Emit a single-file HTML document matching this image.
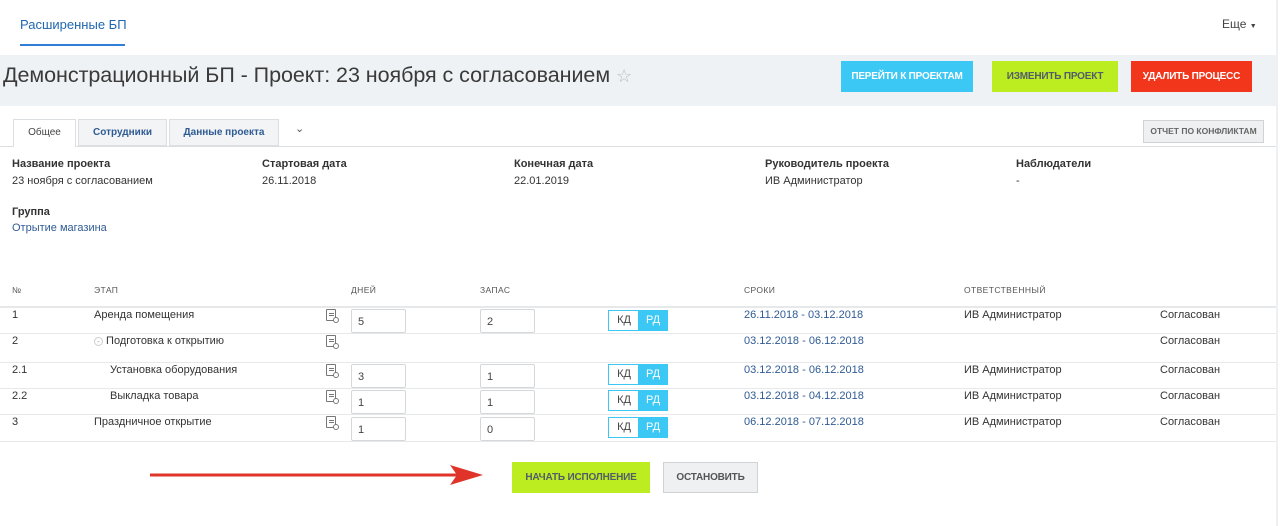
<!DOCTYPE html>
<html><head><meta charset="utf-8"><style>
*{margin:0;padding:0;box-sizing:border-box}
body{width:1280px;height:526px;background:#fff;font-family:"Liberation Sans",sans-serif;font-size:11px;color:#333;position:relative;overflow:hidden}
.a{position:absolute;white-space:nowrap}
.btn{position:absolute;color:#fff;font-weight:bold;font-size:10px;text-align:center;letter-spacing:-0.2px}
.lbl{font-weight:bold;color:#333;font-size:11px}
.hd{font-size:8.5px;color:#555;letter-spacing:.4px}
.hl{position:absolute;left:0;width:1276px;height:1px;background:#e6e8ea}
.in{position:absolute;width:55px;height:24px;border:1px solid #d5d8da;border-radius:2px;padding:6px 0 0 6px;font-size:11px;color:#444}
.sw{position:absolute;width:60px;height:21px;border:1px solid #3bc8f5;font-size:11px}
.sw span{position:absolute;top:0;height:19px;width:30px;text-align:center;line-height:19px}
.ic{position:absolute;width:10px;height:12px;border:1px solid #777;border-radius:1px}
.ic:before{content:"";position:absolute;left:2px;top:3px;width:5px;height:1px;background:#777;box-shadow:0 2px 0 #777}
.ic:after{content:"";position:absolute;left:6px;top:7px;width:4px;height:4px;border:1px solid #777;border-radius:50%;background:#fff}
.blue{color:#2f5b94}
</style></head><body>
<div class="a" style="left:20px;top:17px;font-size:13px;color:#2067b0">Расширенные БП</div>
<div class="a" style="left:20px;top:44px;width:105px;height:2px;background:#2f7fd6"></div>
<div class="a" style="left:1222px;top:17px;font-size:12px;color:#444">Еще <span style="font-size:7px">▼</span></div>
<div class="a" style="left:1276px;top:0;width:2px;height:526px;background:#eef0f1"></div>
<div class="a" style="left:0;top:55px;width:1276px;height:51px;background:#eef2f4"></div>
<div class="a" style="left:3px;top:63px;font-size:21.5px;color:#3a3a3a;letter-spacing:-0.05px">Демонстрационный БП - Проект: 23 ноября с согласованием <span style="color:#bbb;font-size:18px">☆</span></div>
<div class="btn" style="left:841px;top:61px;width:132px;height:31px;line-height:31px;background:#3bc8f5">ПЕРЕЙТИ К ПРОЕКТАМ</div>
<div class="btn" style="left:992px;top:61px;width:126px;height:31px;line-height:31px;background:#bbed21;color:#535c69">ИЗМЕНИТЬ ПРОЕКТ</div>
<div class="btn" style="left:1131px;top:61px;width:121px;height:31px;line-height:31px;background:#f1361b">УДАЛИТЬ ПРОЦЕСС</div>

<div class="a" style="left:0;top:146px;width:1276px;height:1px;background:#dcdfe1"></div>
<div class="a" style="left:13px;top:119px;width:63px;height:28px;border:1px solid #dcdfe1;border-bottom:none;background:#fff;text-align:center;line-height:25px;font-size:10px;color:#444">Общее</div>
<div class="a" style="left:78px;top:119px;width:89px;height:27px;border:1px solid #dcdfe1;background:#f2f4f5;text-align:center;line-height:25px;font-size:10px;color:#2f5b94;font-weight:bold">Сотрудники</div>
<div class="a" style="left:169px;top:119px;width:110px;height:27px;border:1px solid #dcdfe1;background:#f2f4f5;text-align:center;line-height:25px;font-size:10px;color:#2f5b94;font-weight:bold">Данные проекта</div>
<div class="a" style="left:295px;top:122px;font-size:11px;color:#555">⌄</div>
<div class="a" style="left:1143px;top:120px;width:121px;height:23px;border:1px solid #cfd3d6;background:#eef0f1;text-align:center;line-height:21px;font-size:8.5px;font-weight:bold;color:#666">ОТЧЕТ ПО КОНФЛИКТАМ</div>

<div class="a lbl" style="left:12px;top:158px">Название проекта</div><div class="a" style="left:12px;top:175px">23 ноября с согласованием</div>
<div class="a lbl" style="left:262px;top:158px">Стартовая дата</div><div class="a" style="left:262px;top:175px">26.11.2018</div>
<div class="a lbl" style="left:514px;top:158px">Конечная дата</div><div class="a" style="left:514px;top:175px">22.01.2019</div>
<div class="a lbl" style="left:765px;top:158px">Руководитель проекта</div><div class="a" style="left:765px;top:175px">ИВ Администратор</div>
<div class="a lbl" style="left:1016px;top:158px">Наблюдатели</div><div class="a" style="left:1016px;top:175px">-</div>
<div class="a lbl" style="left:12px;top:206px">Группа</div><div class="a blue" style="left:12px;top:222px">Отрытие магазина</div>

<div class="a hd" style="left:12px;top:285px">№</div>
<div class="a hd" style="left:94px;top:285px">ЭТАП</div>
<div class="a hd" style="left:351px;top:285px">ДНЕЙ</div>
<div class="a hd" style="left:480px;top:285px">ЗАПАС</div>
<div class="a hd" style="left:744px;top:285px">СРОКИ</div>
<div class="a hd" style="left:964px;top:285px">ОТВЕТСТВЕННЫЙ</div>
<div class="hl" style="top:306px;height:2px"></div>
<div class="hl" style="top:333px"></div>
<div class="hl" style="top:362px"></div>
<div class="hl" style="top:388px"></div>
<div class="hl" style="top:414px"></div>
<div class="hl" style="top:441px"></div>

<div class="a" style="left:12px;top:309px">1</div><div class="a" style="left:94px;top:309px">Аренда помещения</div>
<div class="a" style="left:12px;top:335px">2</div><div class="a" style="left:94px;top:335px"><span style="display:inline-block;width:9px;height:9px;border:1px solid #ccc;border-radius:50%;font-size:8px;line-height:7px;text-align:center;color:#999">-</span> Подготовка к открытию</div>
<div class="a" style="left:12px;top:364px">2.1</div><div class="a" style="left:110px;top:364px">Установка оборудования</div>
<div class="a" style="left:12px;top:390px">2.2</div><div class="a" style="left:110px;top:390px">Выкладка товара</div>
<div class="a" style="left:12px;top:416px">3</div><div class="a" style="left:94px;top:416px">Праздничное открытие</div>

<div class="ic" style="left:326px;top:309px"></div>
<div class="ic" style="left:326px;top:335px"></div>
<div class="ic" style="left:326px;top:364px"></div>
<div class="ic" style="left:326px;top:390px"></div>
<div class="ic" style="left:326px;top:416px"></div>

<div class="in" style="left:351px;top:309px">5</div><div class="in" style="left:480px;top:309px">2</div>
<div class="in" style="left:351px;top:364px">3</div><div class="in" style="left:480px;top:364px">1</div>
<div class="in" style="left:351px;top:390px">1</div><div class="in" style="left:480px;top:390px">1</div>
<div class="in" style="left:351px;top:417px">1</div><div class="in" style="left:480px;top:417px">0</div>

<div class="sw" style="left:608px;top:310px"><span style="left:0;color:#444">КД</span><span style="left:29px;background:#3bc8f5;color:#fff">РД</span></div>
<div class="sw" style="left:608px;top:364px"><span style="left:0;color:#444">КД</span><span style="left:29px;background:#3bc8f5;color:#fff">РД</span></div>
<div class="sw" style="left:608px;top:390px"><span style="left:0;color:#444">КД</span><span style="left:29px;background:#3bc8f5;color:#fff">РД</span></div>
<div class="sw" style="left:608px;top:417px"><span style="left:0;color:#444">КД</span><span style="left:29px;background:#3bc8f5;color:#fff">РД</span></div>

<div class="a blue" style="left:744px;top:309px">26.11.2018 - 03.12.2018</div>
<div class="a blue" style="left:744px;top:335px">03.12.2018 - 06.12.2018</div>
<div class="a blue" style="left:744px;top:364px">03.12.2018 - 06.12.2018</div>
<div class="a blue" style="left:744px;top:390px">03.12.2018 - 04.12.2018</div>
<div class="a blue" style="left:744px;top:416px">06.12.2018 - 07.12.2018</div>
<div class="a" style="left:964px;top:309px">ИВ Администратор</div>
<div class="a" style="left:964px;top:364px">ИВ Администратор</div>
<div class="a" style="left:964px;top:390px">ИВ Администратор</div>
<div class="a" style="left:964px;top:416px">ИВ Администратор</div>
<div class="a" style="left:1160px;top:309px">Согласован</div>
<div class="a" style="left:1160px;top:335px">Согласован</div>
<div class="a" style="left:1160px;top:364px">Согласован</div>
<div class="a" style="left:1160px;top:390px">Согласован</div>
<div class="a" style="left:1160px;top:416px">Согласован</div>

<svg class="a" style="left:145px;top:462px" width="340" height="26"><line x1="5" y1="13" x2="318" y2="13" stroke="#e0342a" stroke-width="3"/><polygon points="305,3 338,13 305,23 312,13" fill="#e0342a"/></svg>
<div class="btn" style="left:512px;top:462px;width:138px;height:31px;line-height:31px;background:#bbed21;color:#535c69">НАЧАТЬ ИСПОЛНЕНИЕ</div>
<div class="btn" style="left:663px;top:462px;width:95px;height:31px;line-height:29px;background:#eef0f1;border:1px solid #cfd3d6;color:#555">ОСТАНОВИТЬ</div>
</body></html>
